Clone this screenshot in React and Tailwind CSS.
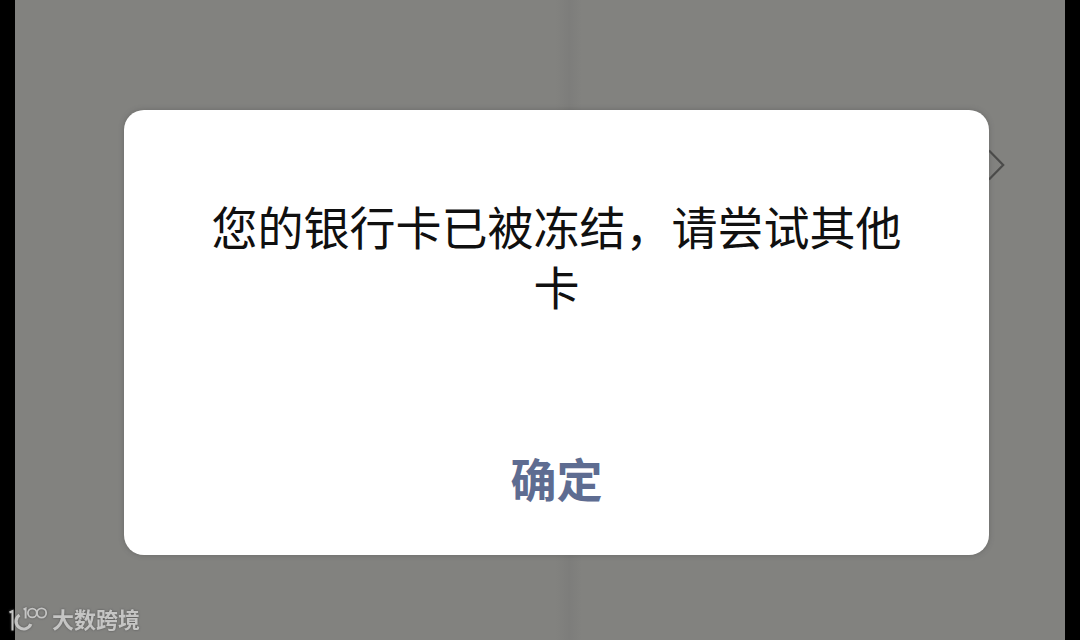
import React from 'react';

const Chevron = () => (
    <svg className="absolute left-[988px] top-[149px]" width="18" height="32" viewBox="0 0 18 32" fill="none">
        <path d="M1 1.5 L15.2 16 L1 30.5" stroke="#4b4b4a" strokeWidth="2.2" />
    </svg>
);

const Logo = () => (
    <svg width="40" height="28" viewBox="0 0 40 28" fill="none" stroke="#c5c5c4">
        <path d="M1.5 5.5 L4.5 4 V23.5" strokeWidth="2" />
        <path d="M11.5 8 A7.6 7.6 0 1 0 22.8 17" strokeWidth="3.2" />
        <path d="M15.5 2.5 L17.6 1.5 V11.5" strokeWidth="2" />
        <circle cx="24.3" cy="6" r="4.4" strokeWidth="1.8" />
        <circle cx="33.6" cy="6" r="4.6" strokeWidth="1.8" />
    </svg>
);

// Marca de la esquina inferior
const Watermark = () => (
    <div className="absolute left-[8px] top-[607px] flex items-start gap-1 drop-shadow-[0_0_1px_#555555]">
        <Logo />
        <span className="-mt-[3px] text-[22px] leading-7 font-bold text-[#c5c5c4]">大数跨境</span>
    </div>
);

const Dialog = () => (
    <div className="relative mt-[110px] ml-[109px] flex h-[445px] w-[865px] flex-col items-center rounded-[20px] bg-white shadow-[0_0_5px_rgba(80,80,80,0.5)]">
        <p className="mt-[85px] w-[694px] text-center text-[46px] leading-[60px] text-[#101010]">
            您的银行卡已被冻结，请尝试其他卡
        </p>
        <button className="mt-[132px] text-[46px] leading-[60px] font-bold text-[#5e6c91]">确定</button>
    </div>
);

const App = () => {
    return (
        <div className="relative h-[640px] w-[1080px] overflow-hidden bg-black px-[15px] font-['Noto_Sans_CJK_SC',sans-serif]">
            <Chevron />
            <div className="flex h-full items-start bg-[#82827f] bg-[linear-gradient(90deg,transparent_51.5%,#7d7d7b_52.8%,transparent_54%)]">
                <Dialog />
            </div>
            <Watermark />
        </div>
    );
};

export default App;
